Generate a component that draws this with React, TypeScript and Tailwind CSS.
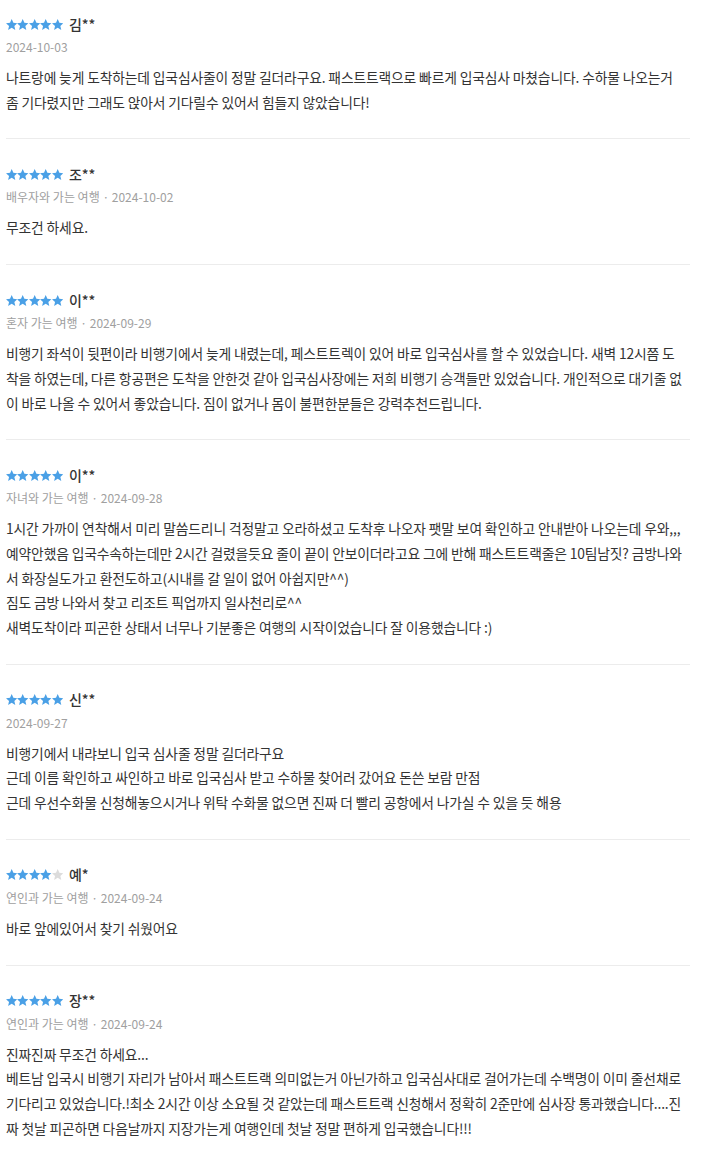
import React from 'react';

type Review = {
  rating: number;
  name: string;
  meta: string;
  lines: string[];
};

const reviews: Review[] = [
  {
    rating: 5,
    name: '김**',
    meta: '2024-10-03',
    lines: [
      '나트랑에 늦게 도착하는데 입국심사줄이 정말 길더라구요. 패스트트랙으로 빠르게 입국심사 마쳤습니다. 수하물 나오는거 좀 기다렸지만 그래도 앉아서 기다릴수 있어서 힘들지 않았습니다!',
    ],
  },
  {
    rating: 5,
    name: '조**',
    meta: '배우자와 가는 여행 · 2024-10-02',
    lines: ['무조건 하세요.'],
  },
  {
    rating: 5,
    name: '이**',
    meta: '혼자 가는 여행 · 2024-09-29',
    lines: [
      '비행기 좌석이 뒷편이라 비행기에서 늦게 내렸는데, 페스트트렉이 있어 바로 입국심사를 할 수 있었습니다. 새벽 12시쯤 도착을 하였는데, 다른 항공편은 도착을 안한것 같아 입국심사장에는 저희 비행기 승객들만 있었습니다. 개인적으로 대기줄 없이 바로 나올 수 있어서 좋았습니다. 짐이 없거나 몸이 불편한분들은 강력추천드립니다.',
    ],
  },
  {
    rating: 5,
    name: '이**',
    meta: '자녀와 가는 여행 · 2024-09-28',
    lines: [
      '1시간 가까이 연착해서 미리 말씀드리니 걱정말고 오라하셨고 도착후 나오자 팻말 보여 확인하고 안내받아 나오는데 우와,,, 예약안했음 입국수속하는데만 2시간 걸렸을듯요 줄이 끝이 안보이더라고요 그에 반해 패스트트랙줄은 10팀남짓? 금방나와서 화장실도가고 환전도하고(시내를 갈 일이 없어 아쉽지만^^)',
      '짐도 금방 나와서 찾고 리조트 픽업까지 일사천리로^^',
      '새벽도착이라 피곤한 상태서 너무나 기분좋은 여행의 시작이었습니다 잘 이용했습니다 :)',
    ],
  },
  {
    rating: 5,
    name: '신**',
    meta: '2024-09-27',
    lines: [
      '비행기에서 내랴보니 입국 심사줄 정말 길더라구요',
      '근데 이름 확인하고 싸인하고 바로 입국심사 받고 수하물 찾어러 갔어요 돈쓴 보람 만점',
      '근데 우선수화물 신청해놓으시거나 위탁 수화물 없으면 진짜 더 빨리 공항에서 나가실 수 있을 듯 해용',
    ],
  },
  {
    rating: 4,
    name: '예*',
    meta: '연인과 가는 여행 · 2024-09-24',
    lines: ['바로 앞에있어서 찾기 쉬웠어요'],
  },
  {
    rating: 5,
    name: '장**',
    meta: '연인과 가는 여행 · 2024-09-24',
    lines: [
      '진짜진짜 무조건 하세요...',
      '베트남 입국시 비행기 자리가 남아서 패스트트랙 의미없는거 아닌가하고 입국심사대로 걸어가는데 수백명이 이미 줄선채로 기다리고 있었습니다.!최소 2시간 이상 소요될 것 같았는데 패스트트랙 신청해서 정확히 2준만에 심사장 통과했습니다....진짜 첫날 피곤하면 다음날까지 지장가는게 여행인데 첫날 정말 편하게 입국했습니다!!!',
    ],
  },
];

function Star({ filled }: { filled: boolean }) {
  return (
    <svg viewBox="1.5 1.5 21 20" className="w-[11.4px] h-[11px]">
      <path
        d="M12 1.5l3.1 6.9 7.4.7-5.6 5 1.7 7.4L12 17.6l-6.6 3.9 1.7-7.4-5.6-5 7.4-.7z"
        fill={filled ? '#4aa0e6' : '#dcdcdc'}
      />
    </svg>
  );
}

function ReviewItem({ review, first, last }: { review: Review; first: boolean; last: boolean }) {
  return (
    <div
      className={`${first ? 'pt-[16px]' : 'pt-[27px]'} pb-[24px] ${last ? '' : 'border-b border-[#ececec]'}`}
    >
      <div className="flex items-center h-4">
        <div className="flex">
          {[0, 1, 2, 3, 4].map((i) => (
            <Star key={i} filled={i < review.rating} />
          ))}
        </div>
        <span className="ml-[6px] text-[14px] font-medium text-[#333]">{review.name}</span>
      </div>
      <div className="mt-[6px] text-[12px] leading-[18px] text-[#a0a0a0]">{review.meta}</div>
      <div className="mt-[9px] mr-[5px] text-[13.8px] tracking-[-0.15px] leading-[24.7px] text-[#333] break-all">
        {review.lines.map((line, i) => (
          <p key={i}>{line}</p>
        ))}
      </div>
    </div>
  );
}

export default function App() {
  return (
    <div
      className="bg-white w-[720px] min-h-[1154px] pl-[6px] pr-[30px]"
      style={{ fontFamily: '"Noto Sans CJK KR", "Noto Sans", sans-serif' }}
    >
      {reviews.map((r, i) => (
        <ReviewItem key={i} review={r} first={i === 0} last={i === reviews.length - 1} />
      ))}
    </div>
  );
}
